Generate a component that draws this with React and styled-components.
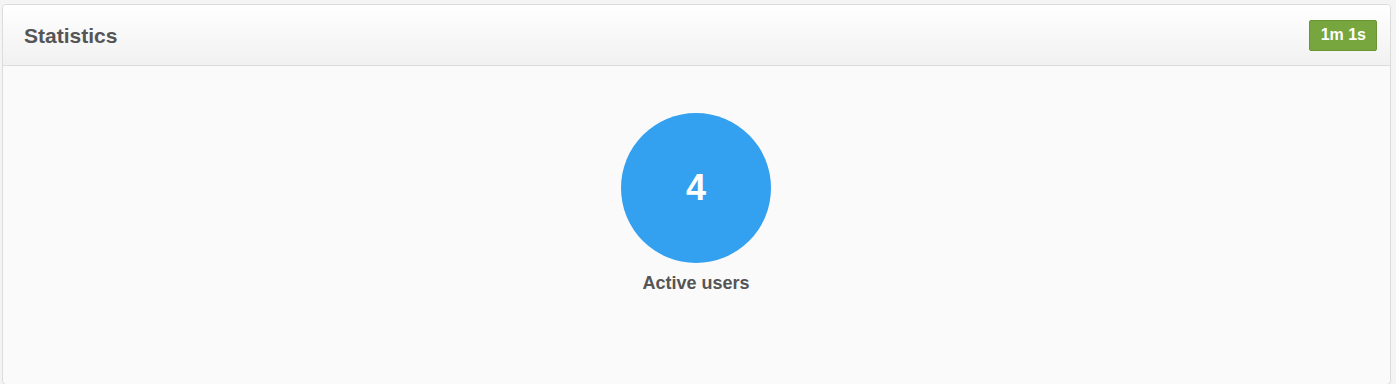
import React from "react";
import styled, { createGlobalStyle } from "styled-components";

const Global = createGlobalStyle`
  html, body { margin: 0; padding: 0; }
  html { height: 384px; overflow: hidden; }
  body {
    background: #f4f4f4;
    font-family: "Liberation Sans", Arial, sans-serif;
  }
  #root { padding: 4px 5px 0 2px; }
`;

const Panel = styled.section`
  box-sizing: border-box;
  border: 1px solid #dcdcdc;
  border-radius: 4px;
  background: #fafafa;
  height: 381px;
  overflow: hidden;
`;

const Header = styled.header`
  display: flex;
  align-items: center;
  justify-content: space-between;
  height: 60px;
  padding: 0 13px 0 21px;
  background: linear-gradient(to bottom, #ffffff 0%, #f1f1f1 100%);
  border-bottom: 1px solid #dcdcdc;
`;

const Title = styled.h2`
  margin: 1px 0 0;
  font-size: 21px;
  font-weight: bold;
  color: #555;
`;

const Badge = styled.span`
  display: inline-flex;
  align-items: center;
  justify-content: center;
  height: 29px;
  padding: 0 10px 0 11px;
  background: #78a63e;
  border: 1px solid #6a9535;
  border-radius: 2px;
  color: #fff;
  font-size: 16px;
  font-weight: bold;
  margin-top: 0;
`;

const Body = styled.div`
  display: flex;
  justify-content: center;
  padding-top: 47px;
  padding-right: 1px;
`;

const Stat = styled.div`
  display: flex;
  flex-direction: column;
  align-items: center;
  gap: 10px;
`;

const Circle = styled.div`
  width: 150px;
  height: 150px;
  border-radius: 50%;
  background: ${(p) => p.$color};
  display: flex;
  align-items: center;
  justify-content: center;
  color: #fff;
  font-size: 36px;
  font-weight: bold;
`;

const Label = styled.div`
  font-size: 18px;
  font-weight: bold;
  color: #555;
`;

export default function App() {
  return (
    <>
      <Global />
      <Panel>
        <Header>
          <Title>Statistics</Title>
          <Badge>1m 1s</Badge>
        </Header>
        <Body>
          <Stat>
            <Circle $color="#33a0f0">4</Circle>
            <Label>Active users</Label>
          </Stat>
        </Body>
      </Panel>
    </>
  );
}
